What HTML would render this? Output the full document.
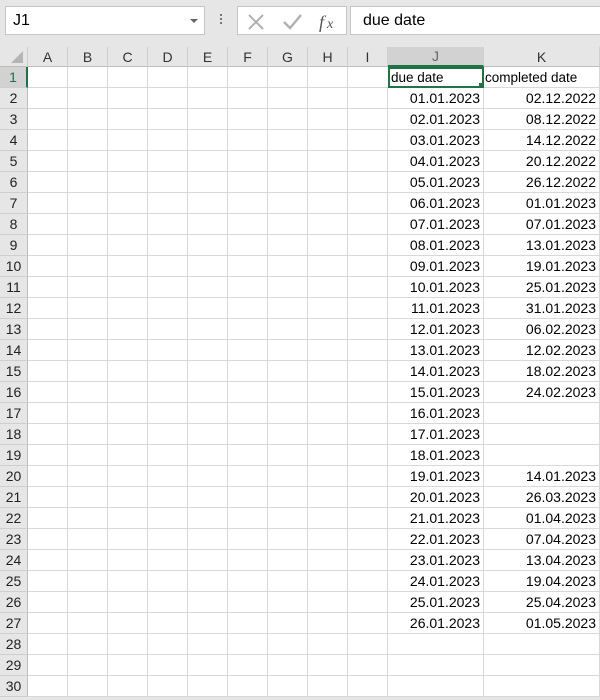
<!DOCTYPE html>
<html><head><meta charset="utf-8"><style>
body{margin:0;width:600px;height:700px;overflow:hidden;background:#e6e6e6;font-family:"Liberation Sans",sans-serif;position:relative}
.nb{position:absolute;left:5px;top:6px;width:200px;height:29px;background:#fff;border:1px solid #c6c6c6;box-sizing:border-box;font-size:16px;line-height:28px;padding-left:7px}
.nb .ar{position:absolute;right:6px;top:12px;width:0;height:0;border-left:4px solid transparent;border-right:4px solid transparent;border-top:4px solid #666}
.dots{position:absolute;left:220px;top:14px;width:2px}
.dots i{display:block;width:2px;height:2px;background:#777;margin-bottom:2px}
.fb{position:absolute;left:237px;top:6px;width:110px;height:29px;background:#fff;border:1px solid #c6c6c6;box-sizing:border-box}
.fx{position:absolute;left:350px;top:6px;width:252px;height:29px;background:#fff;border:1px solid #c6c6c6;box-sizing:border-box;font-size:16px;line-height:28px;padding-left:12px}
table{position:absolute;left:0;top:47px;width:600px;border-collapse:separate;border-spacing:0;table-layout:fixed;background:#fff}
td{height:20px;padding:0;border-right:1px solid #d8d8d8;border-bottom:1px solid #d8d8d8;font-size:14px;white-space:nowrap;overflow:hidden;box-sizing:content-box}
tr.h td{background:#e6e6e6;text-align:center;color:#333;border-right:1px solid #cfcfcf;border-bottom:1px solid #bdbdbd;height:19px}
td.r{background:#e6e6e6;text-align:center;color:#222;border-right:1px solid #bdbdbd;border-bottom:1px solid #cfcfcf}
td.d{text-align:right;padding-right:3px}
</style></head><body>
<div class="nb">J1<span class="ar"></span></div>
<div class="dots"><i></i><i></i><i></i></div>
<div class="fb"><svg width="110" height="29" style="position:absolute;left:0;top:0">
<path d="M11 8 L25 22 M25 8 L11 22" stroke="#b0b0b0" stroke-width="2"/>
<path d="M46 15 L52 21 L63 8" stroke="#b0b0b0" stroke-width="2.4" fill="none"/>
<text x="81" y="21" font-family="Liberation Serif,serif" font-style="italic" font-size="18" fill="#555">f</text><text x="89" y="21" font-family="Liberation Serif,serif" font-style="italic" font-size="14" fill="#555">x</text></svg></div>
<div class="fx">due date</div>
<table>
<colgroup><col style="width:28px"><col style="width:40px"><col style="width:40px"><col style="width:40px"><col style="width:40px"><col style="width:40px"><col style="width:40px"><col style="width:40px"><col style="width:40px"><col style="width:40px"><col style="width:96px"><col style="width:116px"></colgroup>
<tr class="h"><td style="background:#e6e6e6;position:relative"><svg width="14" height="14" style="position:absolute;right:3px;bottom:2px"><path d="M13 1 L13 13 L1 13 Z" fill="#b5b5b5"/></svg></td><td>A</td><td>B</td><td>C</td><td>D</td><td>E</td><td>F</td><td>G</td><td>H</td><td>I</td><td style="background:#d2d2d2;color:#666;border-bottom:2px solid #217346;height:18px">J</td><td>K</td></tr>
<tr><td class="r" style="background:#d2d2d2;color:#217346;border-right:2px solid #217346">1</td><td></td><td></td><td></td><td></td><td></td><td></td><td></td><td></td><td style="border-right:none"></td><td style="outline:2px solid #217346;outline-offset:-2px;position:relative;padding-left:3px;font-size:13.5px">due date<span style="position:absolute;right:-1px;bottom:-1px;width:5px;height:5px;background:#217346"></span></td><td style="font-size:13.5px;padding-left:1px">completed date</td></tr>
<tr><td class="r">2</td><td></td><td></td><td></td><td></td><td></td><td></td><td></td><td></td><td></td><td class="d">01.01.2023</td><td class="d">02.12.2022</td></tr>
<tr><td class="r">3</td><td></td><td></td><td></td><td></td><td></td><td></td><td></td><td></td><td></td><td class="d">02.01.2023</td><td class="d">08.12.2022</td></tr>
<tr><td class="r">4</td><td></td><td></td><td></td><td></td><td></td><td></td><td></td><td></td><td></td><td class="d">03.01.2023</td><td class="d">14.12.2022</td></tr>
<tr><td class="r">5</td><td></td><td></td><td></td><td></td><td></td><td></td><td></td><td></td><td></td><td class="d">04.01.2023</td><td class="d">20.12.2022</td></tr>
<tr><td class="r">6</td><td></td><td></td><td></td><td></td><td></td><td></td><td></td><td></td><td></td><td class="d">05.01.2023</td><td class="d">26.12.2022</td></tr>
<tr><td class="r">7</td><td></td><td></td><td></td><td></td><td></td><td></td><td></td><td></td><td></td><td class="d">06.01.2023</td><td class="d">01.01.2023</td></tr>
<tr><td class="r">8</td><td></td><td></td><td></td><td></td><td></td><td></td><td></td><td></td><td></td><td class="d">07.01.2023</td><td class="d">07.01.2023</td></tr>
<tr><td class="r">9</td><td></td><td></td><td></td><td></td><td></td><td></td><td></td><td></td><td></td><td class="d">08.01.2023</td><td class="d">13.01.2023</td></tr>
<tr><td class="r">10</td><td></td><td></td><td></td><td></td><td></td><td></td><td></td><td></td><td></td><td class="d">09.01.2023</td><td class="d">19.01.2023</td></tr>
<tr><td class="r">11</td><td></td><td></td><td></td><td></td><td></td><td></td><td></td><td></td><td></td><td class="d">10.01.2023</td><td class="d">25.01.2023</td></tr>
<tr><td class="r">12</td><td></td><td></td><td></td><td></td><td></td><td></td><td></td><td></td><td></td><td class="d">11.01.2023</td><td class="d">31.01.2023</td></tr>
<tr><td class="r">13</td><td></td><td></td><td></td><td></td><td></td><td></td><td></td><td></td><td></td><td class="d">12.01.2023</td><td class="d">06.02.2023</td></tr>
<tr><td class="r">14</td><td></td><td></td><td></td><td></td><td></td><td></td><td></td><td></td><td></td><td class="d">13.01.2023</td><td class="d">12.02.2023</td></tr>
<tr><td class="r">15</td><td></td><td></td><td></td><td></td><td></td><td></td><td></td><td></td><td></td><td class="d">14.01.2023</td><td class="d">18.02.2023</td></tr>
<tr><td class="r">16</td><td></td><td></td><td></td><td></td><td></td><td></td><td></td><td></td><td></td><td class="d">15.01.2023</td><td class="d">24.02.2023</td></tr>
<tr><td class="r">17</td><td></td><td></td><td></td><td></td><td></td><td></td><td></td><td></td><td></td><td class="d">16.01.2023</td><td class="d"></td></tr>
<tr><td class="r">18</td><td></td><td></td><td></td><td></td><td></td><td></td><td></td><td></td><td></td><td class="d">17.01.2023</td><td class="d"></td></tr>
<tr><td class="r">19</td><td></td><td></td><td></td><td></td><td></td><td></td><td></td><td></td><td></td><td class="d">18.01.2023</td><td class="d"></td></tr>
<tr><td class="r">20</td><td></td><td></td><td></td><td></td><td></td><td></td><td></td><td></td><td></td><td class="d">19.01.2023</td><td class="d">14.01.2023</td></tr>
<tr><td class="r">21</td><td></td><td></td><td></td><td></td><td></td><td></td><td></td><td></td><td></td><td class="d">20.01.2023</td><td class="d">26.03.2023</td></tr>
<tr><td class="r">22</td><td></td><td></td><td></td><td></td><td></td><td></td><td></td><td></td><td></td><td class="d">21.01.2023</td><td class="d">01.04.2023</td></tr>
<tr><td class="r">23</td><td></td><td></td><td></td><td></td><td></td><td></td><td></td><td></td><td></td><td class="d">22.01.2023</td><td class="d">07.04.2023</td></tr>
<tr><td class="r">24</td><td></td><td></td><td></td><td></td><td></td><td></td><td></td><td></td><td></td><td class="d">23.01.2023</td><td class="d">13.04.2023</td></tr>
<tr><td class="r">25</td><td></td><td></td><td></td><td></td><td></td><td></td><td></td><td></td><td></td><td class="d">24.01.2023</td><td class="d">19.04.2023</td></tr>
<tr><td class="r">26</td><td></td><td></td><td></td><td></td><td></td><td></td><td></td><td></td><td></td><td class="d">25.01.2023</td><td class="d">25.04.2023</td></tr>
<tr><td class="r">27</td><td></td><td></td><td></td><td></td><td></td><td></td><td></td><td></td><td></td><td class="d">26.01.2023</td><td class="d">01.05.2023</td></tr>
<tr><td class="r">28</td><td></td><td></td><td></td><td></td><td></td><td></td><td></td><td></td><td></td><td></td><td></td></tr>
<tr><td class="r">29</td><td></td><td></td><td></td><td></td><td></td><td></td><td></td><td></td><td></td><td></td><td></td></tr>
<tr><td class="r">30</td><td></td><td></td><td></td><td></td><td></td><td></td><td></td><td></td><td></td><td></td><td></td></tr>
</table>
</body></html>
